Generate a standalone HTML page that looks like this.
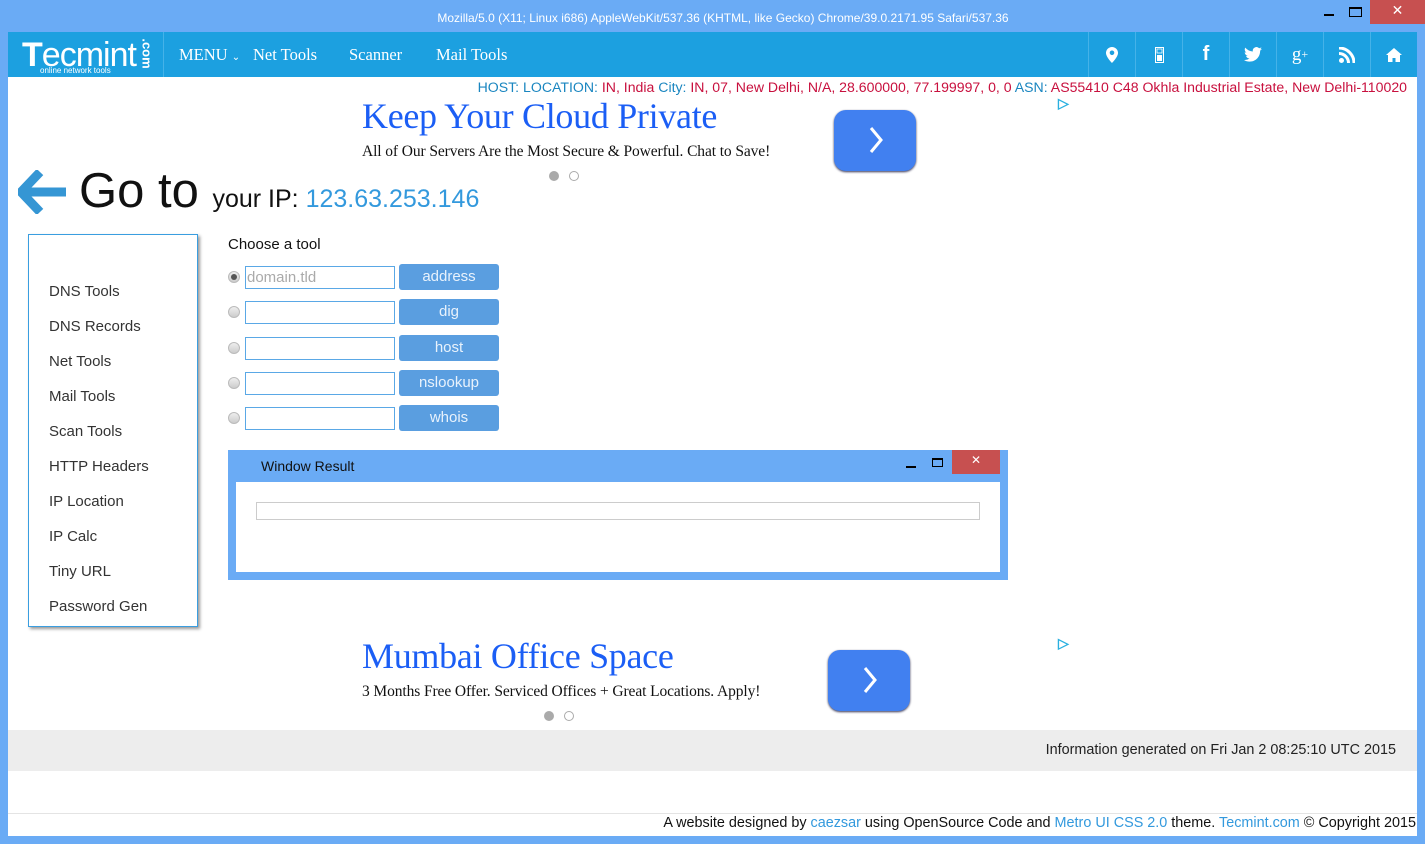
<!DOCTYPE html>
<html><head><meta charset="utf-8"><style>
*{margin:0;padding:0;box-sizing:border-box}
body{width:1425px;height:844px;background:#6aabf5;font-family:"Liberation Sans",sans-serif;position:relative;overflow:hidden}
.a{position:absolute}
.page{left:8px;top:32px;width:1409px;height:804px;background:#fff}
.nav{left:8px;top:32px;width:1409px;height:45px;background:#1ca0e0}
.nav .m{position:absolute;top:13px;color:#fff;font-family:"Liberation Serif",serif;font-size:16.5px}
.ic{position:absolute;top:32px;width:47px;height:45px;border-left:1px solid #45b2e8;display:flex;align-items:center;justify-content:center;color:#fff}
.serif{font-family:"Liberation Serif",serif}
.side{left:28px;top:234px;width:170px;height:393px;border:1px solid #3a9ee0;box-shadow:2px 2px 3px #999}
.side div{position:absolute;left:20px;font-size:15px;color:#333}
.inp{position:absolute;left:245px;width:150px;height:23px;border:1px solid #5aa8e6;background:#fff}
.btn{position:absolute;left:399px;width:100px;height:26px;background:#5a9ee0;border-radius:3px;color:#e8f2fc;font-size:15px;text-align:center;line-height:26px}
.rad{position:absolute;left:228px;width:12px;height:12px;border-radius:50%;border:1px solid #bbb;background:linear-gradient(#eee,#ccc)}
.bl{color:#3399dd}
</style></head><body>
<div class="a" style="top:11px;left:0;width:1446px;text-align:center;color:#fff;font-size:12px">Mozilla/5.0 (X11; Linux i686) AppleWebKit/537.36 (KHTML, like Gecko) Chrome/39.0.2171.95 Safari/537.36</div>
<div class="a" style="left:1324px;top:14px;width:10px;height:2px;background:#000"></div>
<div class="a" style="left:1349px;top:7px;width:13px;height:10px;border:1px solid #000;border-top-width:2px"></div>
<div class="a" style="left:1370px;top:0;width:55px;height:24px;background:#c75050;color:#fff;text-align:center;font-size:14px;line-height:20px">✕</div>
<div class="a page"></div>
<div class="a nav">
 <div class="a" style="left:14px;top:6px;color:#fff;font-size:34px;font-weight:bold;letter-spacing:-1px;line-height:34px">T<span style="font-weight:normal">ecmint</span></div>
 <div class="a" style="left:32px;top:34px;color:#fff;font-size:8px">online network tools</div>
 <div class="a" style="left:124px;top:14px;color:#fff;font-size:13px;transform:rotate(90deg);font-weight:bold">.com</div>
 <div class="a" style="left:155px;top:0;width:1px;height:45px;background:#45b2e8"></div>
 <div class="m" style="left:171px">MENU <span style="font-size:10px">⌄</span></div>
 <div class="m" style="left:245px">Net Tools</div>
 <div class="m" style="left:341px">Scanner</div>
 <div class="m" style="left:428px">Mail Tools</div>
</div>
<div class="ic" style="left:1088px"><svg width="12" height="16" viewBox="0 0 12 16"><path d="M6 0a6 6 0 0 0-6 6c0 4 6 10 6 10s6-6 6-10a6 6 0 0 0-6-6zm0 3.5a2.3 2.3 0 1 1 0 4.6 2.3 2.3 0 0 1 0-4.6z" fill="#fff" fill-rule="evenodd"/></svg></div>
<div class="ic" style="left:1135px"><svg width="9" height="16"><rect x="0.5" y="0.5" width="8" height="15" fill="none" stroke="#fff"/><rect x="2" y="8" width="5" height="6" fill="#fff"/><rect x="2" y="2" width="5" height="4" fill="none" stroke="#fff" stroke-width=".8"/></svg></div>
<div class="ic" style="left:1182px;font-weight:bold;font-size:20px">f</div>
<div class="ic" style="left:1229px"><svg width="18" height="15" viewBox="0 0 24 20"><path d="M24 2.4a10 10 0 0 1-2.8.8A5 5 0 0 0 23.3.5a10 10 0 0 1-3.1 1.2A4.9 4.9 0 0 0 11.8 6 14 14 0 0 1 1.7.9a4.9 4.9 0 0 0 1.5 6.6 5 5 0 0 1-2.2-.6 4.9 4.9 0 0 0 3.9 4.9 5 5 0 0 1-2.2.1 4.9 4.9 0 0 0 4.6 3.4A9.9 9.9 0 0 1 0 17.3 14 14 0 0 0 7.5 19.5c9.1 0 14-7.5 14-14v-.6A10 10 0 0 0 24 2.4z" fill="#fff"/></svg></div>
<div class="ic" style="left:1276px;font-family:'Liberation Serif',serif;font-size:19px">g<sup style="font-size:12px">+</sup></div>
<div class="ic" style="left:1323px"><svg width="16" height="16"><circle cx="2.5" cy="13.5" r="2.5" fill="#fff"/><path d="M0 6.5a9.5 9.5 0 0 1 9.5 9.5M0 1a15 15 0 0 1 15 15" stroke="#fff" stroke-width="3" fill="none"/></svg></div>
<div class="ic" style="left:1370px;border-right:none"><svg width="16" height="14"><path d="M8 0 0 7h2v7h4.5v-4h3v4H14V7h2z" fill="#fff"/></svg></div>
<div class="a" style="right:18px;top:79px;font-size:14.1px;color:#c8103e;white-space:nowrap"><span style="color:#1a86c0">HOST: LOCATION:</span> IN, India <span style="color:#1a86c0">City:</span> IN, 07, New Delhi, N/A, 28.600000, 77.199997, 0, 0 <span style="color:#1a86c0">ASN:</span> AS55410 C48 Okhla Industrial Estate, New Delhi-110020</div>

<div class="a serif" style="left:362px;top:95px;font-size:36px;color:#1b5ef5;letter-spacing:-.3px">Keep Your Cloud Private</div>
<div class="a serif" style="left:362px;top:143px;font-size:15.5px;color:#111;letter-spacing:-.1px">All of Our Servers Are the Most Secure &amp; Powerful. Chat to Save!</div>
<div class="a" style="left:834px;top:110px;width:82px;height:61px;background:#4180f0;border-radius:12px;box-shadow:0 1px 2px #335"><svg width="82" height="61"><path d="M37 18l10 12-10 12" stroke="#fff" stroke-width="3" fill="none"/></svg></div>
<div class="a" style="left:549px;top:171px;width:10px;height:10px;border-radius:50%;background:#aaa"></div>
<div class="a" style="left:569px;top:171px;width:10px;height:10px;border-radius:50%;border:1px solid #aaa"></div>
<div class="a" style="left:1058px;top:95px;color:#2ab0e0;font-size:14px;font-weight:bold">▷</div>

<svg class="a" style="left:18px;top:170px" width="50" height="44"><path d="M22 2 3 22l19 20M4 22h44" stroke="#3596d4" stroke-width="9" fill="none"/></svg>
<div class="a" style="left:79px;top:163px;font-size:49px;color:#111;white-space:nowrap">Go to <span style="font-size:25px">your IP: <span class="bl">123.63.253.146</span></span></div>

<div class="a side">
 <div style="top:48px">DNS Tools</div><div style="top:83px">DNS Records</div><div style="top:118px">Net Tools</div><div style="top:153px">Mail Tools</div><div style="top:188px">Scan Tools</div><div style="top:223px">HTTP Headers</div><div style="top:258px">IP Location</div><div style="top:293px">IP Calc</div><div style="top:328px">Tiny URL</div><div style="top:363px">Password Gen</div>
</div>
<div class="a" style="left:228px;top:236px;font-size:15px;color:#111">Choose a tool</div>
<div class="rad" style="top:271px"><div style="width:6px;height:6px;border-radius:50%;background:#555;margin:2px"></div></div>
<div class="inp" style="top:266px;color:#aaa;font-size:15px;padding-left:1px;line-height:21px">domain.tld</div>
<div class="btn" style="top:264px">address</div>
<div class="rad" style="top:306px"></div><div class="inp" style="top:301px"></div><div class="btn" style="top:299px">dig</div>
<div class="rad" style="top:342px"></div><div class="inp" style="top:337px"></div><div class="btn" style="top:335px">host</div>
<div class="rad" style="top:377px"></div><div class="inp" style="top:372px"></div><div class="btn" style="top:370px">nslookup</div>
<div class="rad" style="top:412px"></div><div class="inp" style="top:407px"></div><div class="btn" style="top:405px">whois</div>

<div class="a" style="left:228px;top:450px;width:780px;height:130px;background:#6aabf5"></div>
<div class="a" style="left:261px;top:458px;font-size:14px;color:#111">Window Result</div>
<div class="a" style="left:906px;top:466px;width:10px;height:2px;background:#000"></div>
<div class="a" style="left:932px;top:458px;width:11px;height:9px;border:1px solid #000;border-top-width:2px"></div>
<div class="a" style="left:952px;top:450px;width:48px;height:24px;background:#c75050;color:#fff;text-align:center;font-size:12px;line-height:20px">✕</div>
<div class="a" style="left:236px;top:482px;width:764px;height:90px;background:#fff"></div>
<div class="a" style="left:256px;top:502px;width:724px;height:18px;border:1px solid #ccc"></div>

<div class="a serif" style="left:362px;top:635px;font-size:36px;color:#1b5ef5;letter-spacing:-.3px">Mumbai Office Space</div>
<div class="a serif" style="left:362px;top:683px;font-size:15.5px;color:#111;letter-spacing:-.1px">3 Months Free Offer. Serviced Offices + Great Locations. Apply!</div>
<div class="a" style="left:828px;top:650px;width:82px;height:61px;background:#4180f0;border-radius:12px;box-shadow:0 1px 2px #335"><svg width="82" height="61"><path d="M37 18l10 12-10 12" stroke="#fff" stroke-width="3" fill="none"/></svg></div>
<div class="a" style="left:544px;top:711px;width:10px;height:10px;border-radius:50%;background:#aaa"></div>
<div class="a" style="left:564px;top:711px;width:10px;height:10px;border-radius:50%;border:1px solid #aaa"></div>
<div class="a" style="left:1058px;top:635px;color:#2ab0e0;font-size:14px;font-weight:bold">▷</div>

<div class="a" style="left:8px;top:730px;width:1409px;height:41px;background:#ededed"></div>
<div class="a" style="right:29px;top:742px;font-size:14.4px;color:#222">Information generated on Fri Jan 2 08:25:10 UTC 2015</div>
<div class="a" style="left:8px;top:813px;width:1409px;height:1px;background:#e4e4e4"></div>
<div class="a" style="right:9px;top:815px;font-size:14.4px;color:#111;white-space:nowrap">A website designed by <span class="bl">caezsar</span> using OpenSource Code and <span class="bl">Metro UI CSS 2.0</span> theme. <span class="bl">Tecmint.com</span> © Copyright 2015</div>
</body></html>
